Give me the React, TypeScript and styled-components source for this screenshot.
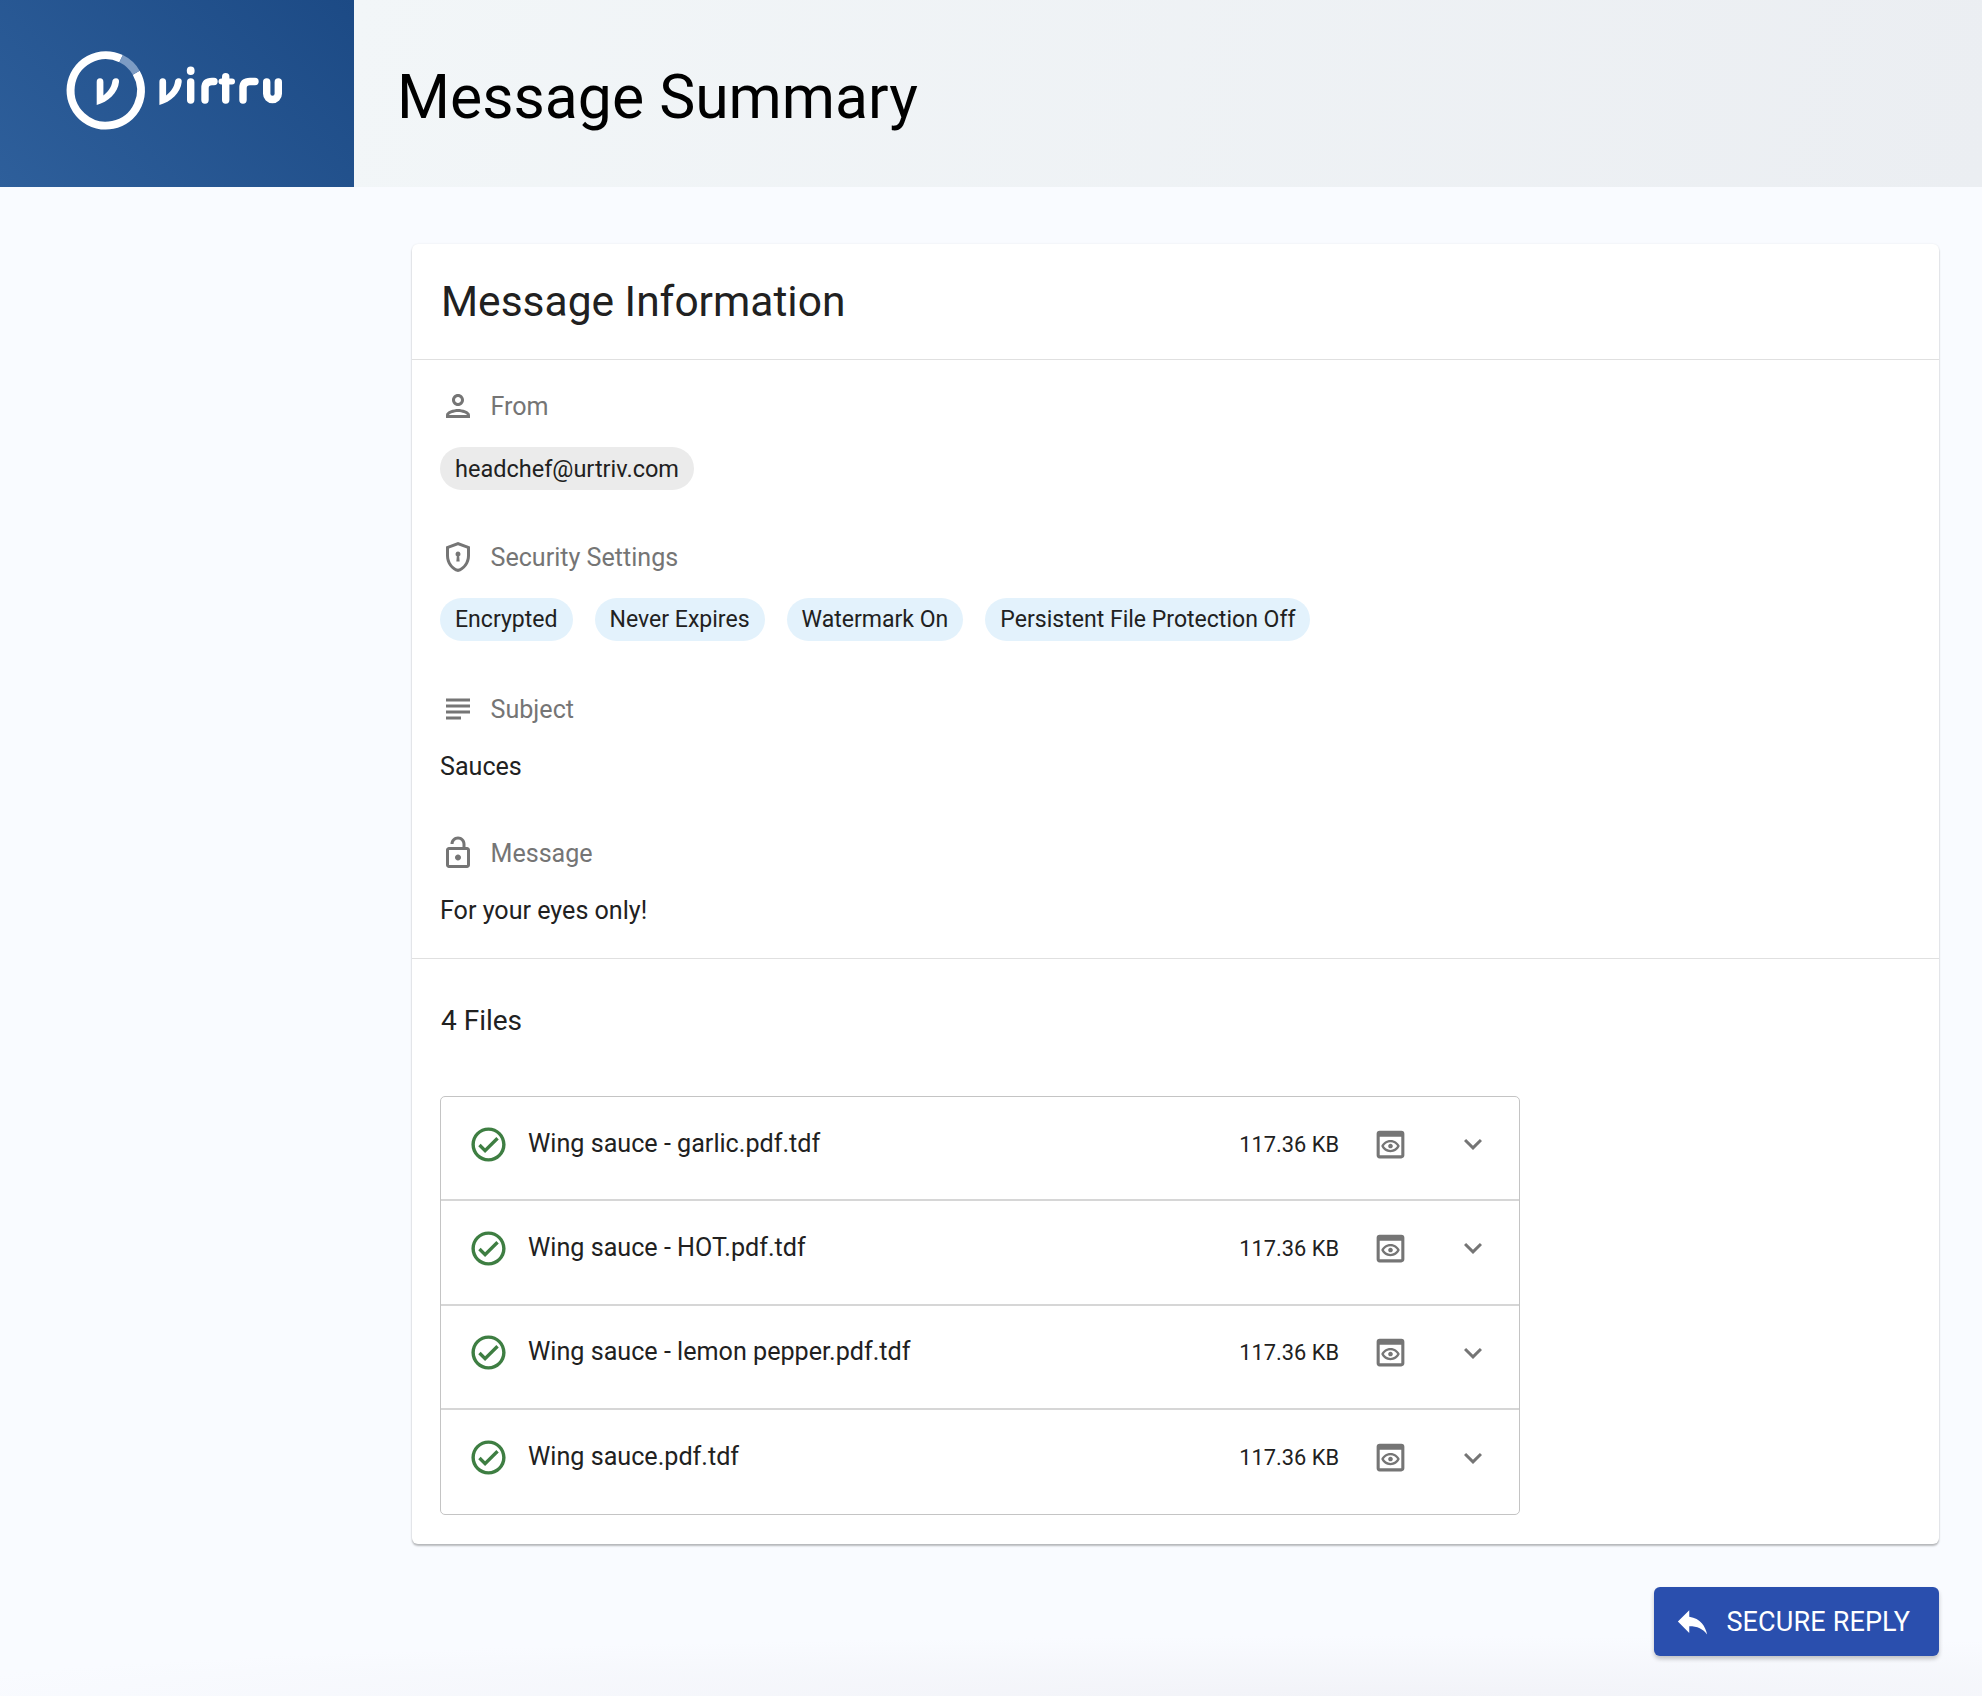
import React from "react";
import styled, { createGlobalStyle } from "styled-components";
import {
  MdOutlinePerson,
  MdSubject,
  MdOutlineCheckCircle,
  MdOutlinePreview,
  MdExpandMore,
  MdReply,
  MdOutlineLockOpen,
} from "react-icons/md";

const Global = createGlobalStyle`
  html, body { margin: 0; padding: 0; }
  body { font-family: Roboto, "Liberation Sans", sans-serif; background: #f9fbff; }
`;

const Page = styled.div`
  width: 1982px;
  height: 1696px;
  overflow: hidden;
  display: flex;
  flex-direction: column;
  background: radial-gradient(ellipse 1500px 60px at 70% 100%, #f2f3f8 0%, rgba(249, 251, 255, 0) 100%), #f9fbff;
`;

const Header = styled.header`
  display: flex;
  height: 187px;
  flex: none;
`;

const LogoPanel = styled.div`
  width: 354px;
  flex: none;
  display: flex;
  align-items: center;
  padding: 0 0 7px 50px;
  box-sizing: border-box;
  background: linear-gradient(45deg, #2e5f9b 0%, #1c4a85 100%);
`;

const TitleBar = styled.div`
  flex: 1;
  display: flex;
  align-items: center;
  padding: 9px 0 0 43px;
  box-sizing: border-box;
  background: linear-gradient(100deg, #f2f6f8 0%, #ebeef2 100%);
`;

const Title = styled.h1`
  margin: 0;
  font-size: 60.7px;
  font-weight: 400;
  color: #000;
  line-height: 1;
`;

const Main = styled.main`
  display: flex;
  flex-direction: column;
  align-items: flex-end;
  padding: 57px 43px 0 412px;
`;

const Card = styled.section`
  width: 100%;
  height: 1300px;
  box-sizing: border-box;
  background: #fff;
  border-radius: 6px;
  box-shadow: 0 2px 2px rgba(0, 0, 0, 0.26), 0 0 2px rgba(0, 0, 0, 0.08);
  display: flex;
  flex-direction: column;
`;

const CardHead = styled.div`
  height: 116px;
  box-sizing: border-box;
  padding: 0 29px;
  display: flex;
  align-items: center;
  border-bottom: 1px solid #e0e0e0;
`;

const CardTitle = styled.h2`
  margin: 0;
  font-size: 42.5px;
  font-weight: 400;
  color: #212121;
`;

const Info = styled.div`
  height: 599px;
  box-sizing: border-box;
  padding: 24px 28px 0;
  border-bottom: 1px solid #e0e0e0;
  display: flex;
  flex-direction: column;
`;

const Label = styled.div`
  display: flex;
  align-items: center;
  gap: 14.5px;
  height: 44px;
  font-size: 25.1px;
  color: #757575;
  svg { width: 36px; height: 36px; color: #757575; flex: none; }
`;

const ChipRow = styled.div<{ $after: number }>`
  display: flex;
  gap: 22px;
  margin-top: 19px;
  margin-bottom: ${(p) => p.$after}px;
`;

const Chip = styled.span<{ $tone: "grey" | "blue" }>`
  height: 43px;
  padding: 0 15px;
  border-radius: 22px;
  display: inline-flex;
  align-items: center;
  font-size: ${(p) => (p.$tone === "grey" ? "23.5px" : "23.05px")};
  color: #212121;
  background: ${(p) => (p.$tone === "grey" ? "#ebebeb" : "#e3f2fc")};
`;

const Value = styled.div<{ $after: number }>`
  font-size: 25.1px;
  color: #212121;
  line-height: 30px;
  margin-top: 21px;
  margin-bottom: ${(p) => p.$after}px;
`;

const Files = styled.div`
  padding: 0 28px;
`;

const FilesTitle = styled.h3`
  margin: 0;
  height: 137px;
  box-sizing: border-box;
  padding: 44px 0 0 1px;
  font-size: 28px;
  font-weight: 400;
  color: #212121;
  line-height: 36px;
`;

const FileList = styled.div`
  width: 1080px;
  border: 1px solid #c4c4c4;
  border-radius: 5px;
  box-sizing: border-box;
`;

const FileRow = styled.div`
  height: 104.25px;
  box-sizing: border-box;
  display: flex;
  align-items: center;
  padding: 0 28px 8px 27px;
  border-bottom: 2px solid #d6d6d6;
  &:last-child { border-bottom: none; }
`;

const FileStatus = styled.span`
  display: flex;
  color: #3e7e42;
  margin-right: 19px;
  svg { width: 41px; height: 41px; }
`;

const FileName = styled.span`
  flex: 1;
  font-size: 25.15px;
  color: #212121;
  padding-bottom: 2px;
`;

const FileSize = styled.span`
  font-size: 21.8px;
  color: #212121;
  margin-right: 33px;
`;

const FileAction = styled.span<{ $gap: number; $size: number }>`
  display: flex;
  color: #757575;
  margin-right: ${(p) => p.$gap}px;
  svg { width: ${(p) => p.$size}px; height: ${(p) => p.$size}px; }
`;

const Actions = styled.div`
  margin-top: 43px;
`;

const ReplyButton = styled.button`
  width: 285px;
  height: 69px;
  border: 0;
  border-radius: 6px;
  background: #2a4fae;
  color: #fff;
  font-family: inherit;
  font-size: 27px;
  letter-spacing: 0.15px;
  font-weight: 400;
  display: flex;
  align-items: center;
  justify-content: flex-end;
  padding: 0 29px 0 0;
  gap: 14px;
  box-shadow: 0 3px 4px rgba(0, 0, 0, 0.22);
  svg { width: 39px; height: 39px; }
`;

const smallV =
  "M46.700 52 Q46.700 48.300 50 48.300 Q53.400 48.300 53.400 52 V65.500 C58 62 61.500 57 62.200 52 Q62.600 48.300 66 48.300 Q69.300 48.300 69 52 C68 63 58 72 46.700 75 Z";

const Logo = () => (
  <svg width="260" height="120" viewBox="0 0 260 120" fill="none">
    <path d="M86.200 42.700 A35.200 35.200 0 1 1 71.100 28.700" stroke="#fff" strokeWidth="8" />
    <path d="M71.100 28.700 A35.200 35.200 0 0 1 86.200 42.700" stroke="#7d9cc4" strokeWidth="8" />
    <path d={smallV} fill="#fff" />
    <path d={smallV} fill="#fff" transform="translate(62.700 0)" />
    <g stroke="#fff" strokeWidth="7.400" strokeLinecap="round">
      <path d="M140.700 52 V70" />
      <path d="M140.700 40.500 v0.500" strokeWidth="7.800" />
      <path d="M155 70 V58 Q155 51.500 162 51.500 H164" />
      <path d="M175.700 46.700 V70" />
      <path d="M171.500 51.500 H182" strokeWidth="6" />
      <path d="M193 70 V58 Q193 51.500 200 51.500 H205" />
      <path d="M216.700 52 V63.700 A5.800 5.800 0 0 0 228.300 63.700 V52" />
    </g>
  </svg>
);

const ShieldIcon = () => (
  <svg viewBox="0 0 24 24" fill="currentColor">
    <path d="M12 2 4 5v6.100c0 5 3.400 9.700 8 10.900 4.600-1.200 8-5.900 8-10.900V5l-8-3zm6 9.100c0 4-2.550 7.700-6 8.800-3.450-1.100-6-4.800-6-8.800V6.400l6-2.250 6 2.250v4.700z" />
    <path d="M12 8.400a1.650 1.650 0 0 0-.8 3.100L10.900 15h2.200l-.3-3.500A1.650 1.650 0 0 0 12 8.400z" />
  </svg>
);

const files = [
  "Wing sauce - garlic.pdf.tdf",
  "Wing sauce - HOT.pdf.tdf",
  "Wing sauce - lemon pepper.pdf.tdf",
  "Wing sauce.pdf.tdf",
];

const settings = ["Encrypted", "Never Expires", "Watermark On", "Persistent File Protection Off"];

export default function App() {
  return (
    <Page>
      <Global />
      <Header>
        <LogoPanel>
          <Logo />
        </LogoPanel>
        <TitleBar>
          <Title>Message Summary</Title>
        </TitleBar>
      </Header>
      <Main>
        <Card>
          <CardHead>
            <CardTitle>Message Information</CardTitle>
          </CardHead>
          <Info>
            <Label>
              <MdOutlinePerson />
              From
            </Label>
            <ChipRow $after={45}>
              <Chip $tone="grey">headchef@urtriv.com</Chip>
            </ChipRow>
            <Label>
              <ShieldIcon />
              Security Settings
            </Label>
            <ChipRow $after={46}>
              {settings.map((s) => (
                <Chip key={s} $tone="blue">
                  {s}
                </Chip>
              ))}
            </ChipRow>
            <Label>
              <MdSubject />
              Subject
            </Label>
            <Value $after={49}>Sauces</Value>
            <Label>
              <MdOutlineLockOpen />
              Message
            </Label>
            <Value $after={0}>For your eyes only!</Value>
          </Info>
          <Files>
            <FilesTitle>4 Files</FilesTitle>
            <FileList>
              {files.map((f) => (
                <FileRow key={f}>
                  <FileStatus>
                    <MdOutlineCheckCircle />
                  </FileStatus>
                  <FileName>{f}</FileName>
                  <FileSize>117.36 KB</FileSize>
                  <FileAction $gap={46} $size={37}>
                    <MdOutlinePreview />
                  </FileAction>
                  <FileAction $gap={0} $size={36}>
                    <MdExpandMore />
                  </FileAction>
                </FileRow>
              ))}
            </FileList>
          </Files>
        </Card>
        <Actions>
          <ReplyButton>
            <MdReply />
            SECURE REPLY
          </ReplyButton>
        </Actions>
      </Main>
    </Page>
  );
}
